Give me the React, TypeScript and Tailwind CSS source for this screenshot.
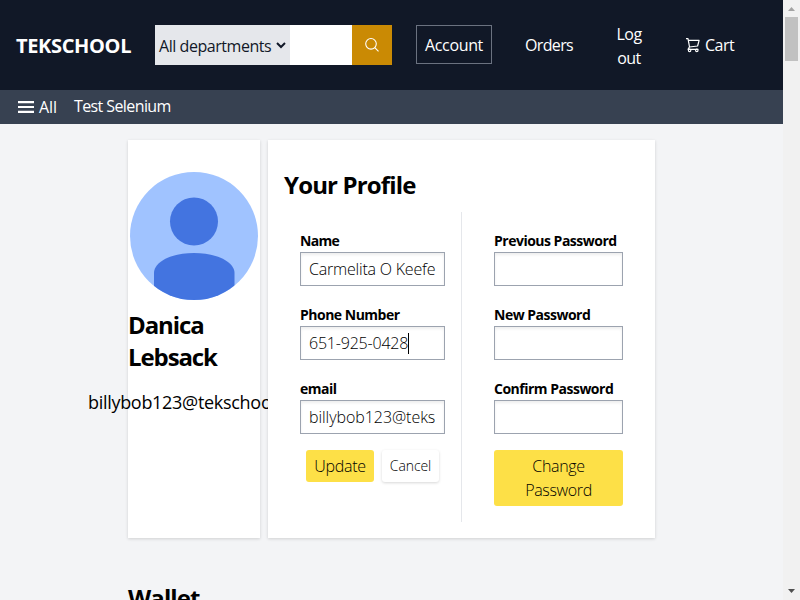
function Field({ label, value, tracking = "", width, labelTracking, caret = false }: {
  label: string; value?: string; tracking?: string; width: string; labelTracking: string; caret?: boolean;
}) {
  return (
    <div className="mb-4">
      <div className={`h-6 text-[14px] leading-[26px] font-bold whitespace-nowrap ${labelTracking}`}>{label}</div>
      <div className={`flex h-[34px] items-center overflow-hidden border border-[#9ca3af] bg-white px-2 whitespace-nowrap text-black shadow-[inset_0_2px_3px_rgba(0,0,0,0.07)] ${width}`}>
        <span className={`font-light ${tracking}`}>{value}</span>
        {caret && <span className="h-[21px] w-px bg-black" />}
      </div>
    </div>
  );
}

function SearchIcon() {
  return (
    <svg width="16" height="16" viewBox="0 0 16 16" fill="none" stroke="currentColor" strokeWidth="1.100">
      <circle cx="7" cy="6.800" r="5.300" />
      <path d="M10.800 10.700L14.500 14.400" />
    </svg>
  );
}

function CartIcon() {
  return (
    <svg className="ml-[42px]" width="16" height="16" viewBox="0 0 16 16" fill="none" stroke="currentColor" strokeWidth="1.200">
      <path d="M1 1.600h2l1.500 8.400M3.300 3.400h10.800l-1.500 5.600-8.200 1-1.300 2.400h10.300" strokeLinejoin="round" />
      <circle cx="4.600" cy="13.400" r="1.200" />
      <circle cx="11.800" cy="13.400" r="1.200" />
    </svg>
  );
}

function Header() {
  return (
    <header className="text-white">
      <div className="flex h-[90px] items-center bg-[#111827]">
        <div className="ml-4 w-[139px] pt-[2px] text-[20px] font-bold tracking-[-0.35px]">TEKSCHOOL</div>
        <div className="flex h-10 w-[237px]">
          <div className="flex w-[135px] items-center bg-[#e5e7eb] pl-1 text-[#111827]">
            <span className="w-[117px] pt-px whitespace-nowrap tracking-[-0.45px]">All departments</span>
            <svg width="10" height="7" viewBox="0 0 10 7" fill="none" stroke="currentColor" strokeWidth="2"><path d="M1 1l4 4 4-4" /></svg>
          </div>
          <div className="w-[62px] bg-white" />
          <div className="flex w-10 items-center justify-center bg-[#ca8a04]"><SearchIcon /></div>
        </div>
        <div className="mb-px ml-6 flex h-[39px] w-[76px] items-center justify-center border border-[#6b7280] pt-px tracking-[-0.35px]">Account</div>
        <div className="ml-[33px] w-[49px] tracking-[-0.65px]">Orders</div>
        <div className="ml-[41px] w-[28px] pt-px text-center tracking-[-0.5px]">Log out</div>
        <CartIcon />
        <div className="ml-1 tracking-[-0.5px]">Cart</div>
      </div>
      <div className="flex h-[34px] items-center bg-[#374151]">
        <svg className="ml-[18px]" width="16" height="12" viewBox="0 0 16 12" fill="currentColor"><path d="M0 0h16v2.200H0zM0 4.900h16v2.200H0zM0 9.800h16V12H0z" /></svg>
        <span className="ml-[5px] w-[35px] tracking-[-0.1px]">All</span>
        <span className="-mt-[2px] tracking-[-0.6px]">Test Selenium</span>
      </div>
    </header>
  );
}

function Avatar() {
  return (
    <svg className="mt-8 shrink-0" width="128" height="128" viewBox="0 0 128 128">
      <defs><clipPath id="disc"><circle cx="64" cy="64" r="64" /></clipPath></defs>
      <g clipPath="url(#disc)">
        <rect width="128" height="128" fill="#a0c3ff" />
        <circle cx="64" cy="49.500" r="24" fill="#4374e0" />
        <path d="M24 128v-27c0-11 17-20 40-20s40.500 9 40.500 20v27z" fill="#4374e0" />
      </g>
    </svg>
  );
}

export default function App() {
  return (
    <div className="flex h-[600px] w-[800px] overflow-hidden bg-[#f3f4f6] font-['Open_Sans','Noto_Sans',sans-serif] text-[16px] leading-6 text-black">
      <div className="w-[783px]">
        <Header />
        <main className="px-32 pt-4">
          <div className="flex h-[398px] gap-2">
            <section className="flex w-[132px] flex-col items-center bg-white shadow-[0_1px_3px_rgba(0,0,0,0.15)]">
              <Avatar />
              <h2 className="mt-[9px] w-full text-[24px] leading-8 font-bold tracking-[-1.1px]">Danica Lebsack</h2>
              <p className="mt-[15px] w-[212px] text-[18px] leading-7 whitespace-nowrap tracking-[-0.3px]">billybob123@tekschool.us</p>
            </section>
            <section className="z-10 w-[387px] bg-white p-4 shadow-[0_1px_3px_rgba(0,0,0,0.15)]">
              <h1 className="mt-[13px] h-[43px] text-[24px] leading-8 font-bold tracking-[-0.85px]">Your Profile</h1>
              <div className="flex h-[310px]">
                <form className="w-[178px] border-r border-[#e5e7eb] px-4 pt-4">
                  <Field label="Name" value="Carmelita O Keefe" width="w-[145px]" labelTracking="tracking-[-0.7px]" tracking="tracking-[-0.2px]" />
                  <Field label="Phone Number" value="651-925-0428" width="w-[145px]" labelTracking="tracking-[-0.5px]" tracking="tracking-[-0.2px]" caret />
                  <Field label="email" value="billybob123@teks" width="w-[145px]" labelTracking="tracking-[-0.5px]" tracking="tracking-[-0.05px]" />
                  <div className="flex justify-center gap-2">
                    <button type="button" className="h-8 w-[68px] rounded-[3px] bg-[#fde047] font-light text-black tracking-[-0.3px]">Update</button>
                    <button type="button" className="h-8 w-[57px] rounded-[3px] text-[14px] font-light text-black tracking-[-0.1px] shadow-[0_1px_3px_rgba(0,0,0,0.16)]">Cancel</button>
                  </div>
                </form>
                <form className="pt-4 pl-8">
                  <Field label="Previous Password" width="w-[129px]" labelTracking="tracking-[-0.5px]" />
                  <Field label="New Password" width="w-[129px]" labelTracking="tracking-[-0.5px]" />
                  <Field label="Confirm Password" width="w-[129px]" labelTracking="tracking-[-0.5px]" />
                  <button type="button" className="h-14 w-[129px] rounded-[3px] bg-[#fde047] px-4 font-light text-black tracking-[-0.35px]">Change Password</button>
                </form>
              </div>
            </section>
          </div>
          <h2 className="mt-[44px] text-[24px] leading-8 font-bold tracking-[-0.9px]">Wallet</h2>
        </main>
      </div>
      <div className="flex w-[17px] flex-col items-center bg-[#f1f1f1]">
        <svg className="mt-[7px]" width="7" height="4" viewBox="0 0 7 4" fill="#a3a3a3"><path d="M0 4L3.500 0L7 4z" /></svg>
        <div className="mt-[6px] h-11 w-[13px] bg-[#c1c1c1]" />
        <svg className="mt-auto mb-[7px]" width="7" height="4" viewBox="0 0 7 4" fill="#505050"><path d="M0 0L3.500 4L7 0z" /></svg>
      </div>
    </div>
  );
}
